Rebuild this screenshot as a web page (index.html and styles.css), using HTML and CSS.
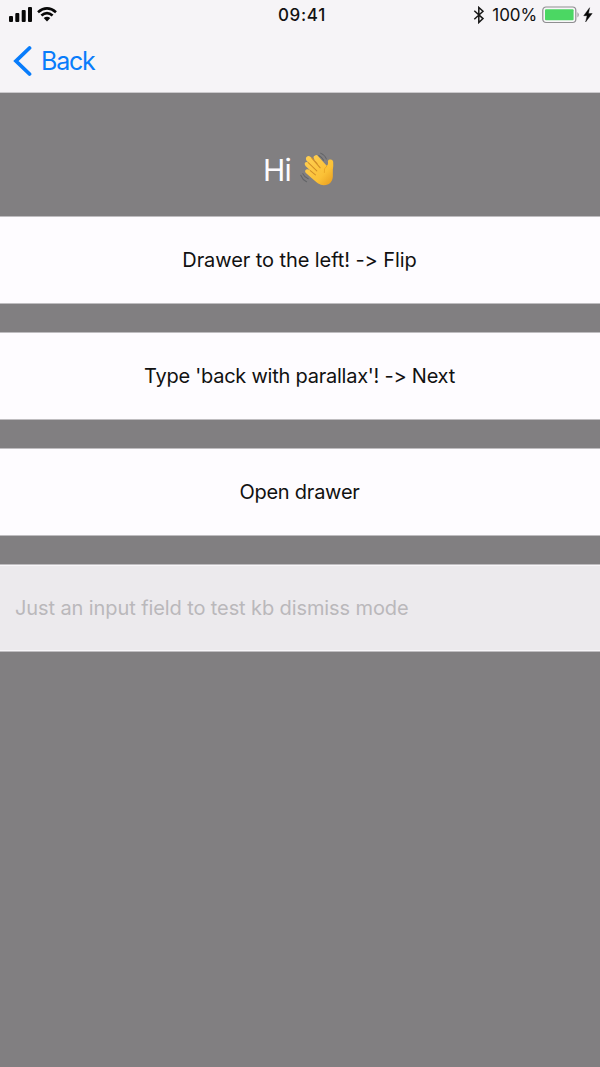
FILE: index.html
```html
<!DOCTYPE html>
<html lang="en">
<head>
<meta charset="utf-8">
<title>Hi</title>
<link rel="stylesheet" href="styles.css">
</head>
<body>
<header class="top">
  <div class="status">
    <div class="status-left">
      <svg class="signal" width="24" height="16" viewBox="0 0 24 16"><rect x="0" y="10" width="4" height="6" rx="1"/><rect x="6.3" y="7" width="4" height="9" rx="1"/><rect x="12.7" y="4" width="4" height="12" rx="1"/><rect x="19" y="1" width="4" height="15" rx="1"/></svg>
      <svg class="wifi" width="20" height="15" viewBox="0 0 20 15"><path d="M1 5.2Q10-2.4 19 5.2M4.4 8.6Q10 3.8 15.6 8.6" fill="none" stroke="#080808" stroke-width="2.7"/><path d="M6.7 11Q10 8.3 13.3 11L10 14.5Z"/></svg>
    </div>
    <time class="clock">09:41</time>
    <div class="status-right">
      <svg class="bluetooth" width="12" height="18" viewBox="0 0 12 18"><path d="M1.3 4.7L10 12.6L5.8 16.5V1.5L10 5.3L1.3 13.2" fill="none" stroke="#171717" stroke-width="1.5"/></svg>
      <span class="percent">100%</span>
      <svg class="battery" width="38" height="18" viewBox="0 0 38 18"><rect x=".8" y="1" width="33" height="15.5" rx="3.2" fill="#f8f6f9" stroke="#8f8e91" stroke-width="1.2"/><rect x="3" y="3.2" width="28.6" height="11.1" rx="1" fill="#4bd763"/><path d="M35.5 6Q38 8.8 35.5 11.5Z" fill="#8f8e91"/></svg>
      <svg class="bolt" width="10" height="16" viewBox="0 0 10 16"><path d="M6.6.7L.7 8.7H4.1L2.6 15L9.2 6.5H5.5Z" stroke="#080808" stroke-width=".4"/></svg>
    </div>
  </div>
  <nav class="nav">
    <svg class="chevron" width="20" height="32" viewBox="0 0 20 32"><path d="M17.5 3L4 16L17.5 29" fill="none" stroke="#087cfb" stroke-width="3.8" stroke-linecap="round"/></svg>
    <a class="back">Back</a>
  </nav>
</header>
<main class="content">
  <h1 class="greeting"><span class="hi">Hi</span>
    <svg class="wave" width="43" height="43" viewBox="0 0 126 126">
      <defs><linearGradient id="skin" x1="0" y1="0" x2="1" y2="1"><stop offset="0" stop-color="#ffd055"/><stop offset=".65" stop-color="#fbc136"/><stop offset="1" stop-color="#e79a1d"/></linearGradient></defs>
      <g class="motion"><path d="M64 22Q73 27 78 36M69 15Q81 20 86 32M17 75Q22 86 33 90M11 80Q16 93 28 99"/></g>
      <path d="M52 23Q57 18 62 24L87 52Q91 50 91 44Q89 35 96 34Q104 32 106 40Q107 51 105 64V84Q104 99 92 106Q76 113 62 104Q53 97 26 73Q21 67 27 63Q31 61 39 66L25 53Q20 46 25 42Q29 39 34 43L28 37Q23 28 31 24Q36 21 43 29L53 39L50 32Q46 26 52 23Z" fill="url(#skin)"/>
      <path d="M43 29L68 58M33 43L58 67M39 66L54 79M53 39L59 46" fill="none" stroke="#d18e27" stroke-width="3" stroke-linecap="round"/>
      <path d="M87 53Q77 60 80 72" fill="none" stroke="#e9a425" stroke-width="2.5" stroke-linecap="round"/>
    </svg>
  </h1>
  <div class="list">
    <button class="row"><span class="label drawer">Drawer to the left! -&gt; Flip</span></button>
    <button class="row"><span class="label type">Type 'back with parallax'! -&gt; Next</span></button>
    <button class="row"><span class="label open">Open drawer</span></button>
    <div class="row field"><span class="label placeholder">Just an input field to test kb dismiss mode</span></div>
  </div>
</main>
</body>
</html>
```
FILE: styles.css
```css
* { box-sizing: border-box; }
body { margin: 0; min-height: 1067px; background: #817f81; font-family: Inter, "Liberation Sans", sans-serif; color: #111; font-feature-settings: "calt" 0; }
svg { display: block; flex: none; fill: #080808; }
.top { height: 93px; background: #f6f4f7; border-bottom: 1px solid #cbc9cc; }
.status { height: 30px; display: grid; grid-template-columns: 1fr auto 1fr; padding: 0 7px 0 9px; }
.status-left { display: flex; gap: 4px; padding-top: 7px; }
.signal { margin-top: -1px; }
.clock { font-size: 17px; font-weight: 500; line-height: 31px; letter-spacing: 0.7px; padding-left: 2px; }
.status-right { display: flex; justify-content: flex-end; padding-top: 6px; }
.percent { margin-left: 7px; margin-right: 5px; font-size: 17px; line-height: 19px; letter-spacing: -0.1px; }
.bolt { margin-left: 3px; margin-top: 1px; }
.nav { height: 61px; padding-left: 12px; display: flex; align-items: center; gap: 9px; }
.back { font-size: 25px; line-height: 30px; letter-spacing: -1.2px; color: #087cfb; }
.chevron { width: 20px; }
.greeting { height: 123px; margin: 0; padding: 55px 0 0 263px; display: flex; font-size: 30px; font-weight: 400; line-height: 44px; color: #fdfbfe; }
.hi { width: 34px; letter-spacing: -0.8px; }
.list { display: flex; flex-direction: column; gap: 28px; }
.row { width: 100%; height: 88px; padding: 0 1px 1px 0; border: 0 solid #bfbdc0; border-width: 1px 0; background: #fefcff; color: #111; display: flex; align-items: center; justify-content: center; font: 20px/28px Inter, "Liberation Sans", sans-serif; font-feature-settings: "calt" 0; }
.label { white-space: nowrap; }
.drawer { letter-spacing: -0.08px; }
.type, .open { letter-spacing: -0.24px; }
.field { justify-content: flex-start; padding-left: 15px; background: #eceaed; box-shadow: inset 0 1px #f8f6f9, inset 0 -1px #f8f6f9; }
.placeholder { color: #bab8bb; letter-spacing: -0.1px; }
.motion { fill: none; stroke: #626467; stroke-width: 3; stroke-linecap: round; }
```
